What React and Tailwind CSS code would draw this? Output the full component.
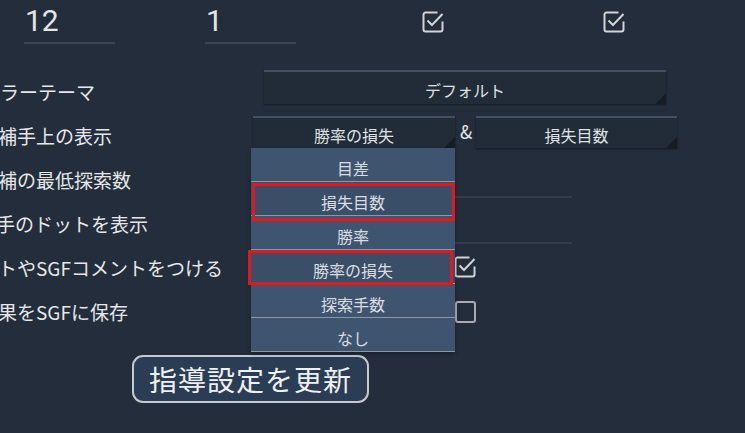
const labelFont = { fontFamily: '"Noto Sans CJK JP", "Noto Sans", sans-serif' }

function CheckedBox({ className }) {
  return (
    <svg className={className} width="22" height="22" viewBox="0 0 22 22" fill="none">
      <path d="M15.5 1.5H3.5a2 2 0 0 0-2 2v15a2 2 0 0 0 2 2h15a2 2 0 0 0 2-2v-8" stroke="#d2d4d8" strokeWidth="2" />
      <path d="M5.5 9.5l4.5 4.5 10.5-11" stroke="#d2d4d8" strokeWidth="2" />
    </svg>
  )
}

function EmptyBox({ className }) {
  return (
    <svg className={className} width="21" height="22" viewBox="0 0 21 22" fill="none">
      <rect x="1" y="1" width="19" height="20" rx="2" stroke="#a9adb3" strokeWidth="2" />
    </svg>
  )
}

function NumberInput({ value, className }) {
  return (
    <div className={`w-[91px] h-[44px] border-b-2 border-[#394555] ${className}`}>
      <div className="pt-[3px] pl-[1px] text-[30px] leading-[36px] text-[#e4e6ea] font-['Roboto']">{value}</div>
    </div>
  )
}

function FlatButton({ children, className }) {
  return (
    <div className={`relative flex items-center justify-center pt-[4px] bg-[#222b38] border-t-2 border-[#415064] shadow-[0_1px_2px_rgba(0,0,0,0.45)] text-[16px] text-[#dfe1e4] ${className}`}>
      {children}
      <div className="absolute right-0 bottom-0 w-0 h-0 border-l-[11px] border-l-transparent border-b-[11px] border-b-[#161c25]" />
    </div>
  )
}

function Label({ text, shift }) {
  return (
    <div className="w-[250px] shrink-0 overflow-hidden">
      <div className="whitespace-nowrap text-[19px] text-[#e6e7ea]" style={{ marginLeft: shift }}>
        {text}
      </div>
    </div>
  )
}

const options = [
  { t: '目差' },
  { t: '損失目数', sel: true },
  { t: '勝率' },
  { t: '勝率の損失', sel: true },
  { t: '探索手数' },
  { t: 'なし' },
]

export default function App() {
  return (
    <div className="relative w-[745px] h-[433px] overflow-hidden bg-[#232d3b]" style={labelFont}>
      {/* top row */}
      <div className="flex h-[70px] items-start">
        <NumberInput value="12" className="ml-[24px]" />
        <NumberInput value="1" className="ml-[90px]" />
        <CheckedBox className="ml-[126px] mt-[11px]" />
        <CheckedBox className="ml-[159px] mt-[11px]" />
      </div>

      <div className="flex h-[44px] items-center">
        <Label text="カラーテーマ" shift="-19px" />
        <FlatButton className="self-start ml-[14px] w-[402px] h-[34px]">デフォルト</FlatButton>
      </div>

      <div className="flex h-[44px] items-center">
        <Label text="候補手上の表示" shift="-21px" />
        <div className="self-start mt-[2px] ml-[3px] flex items-start">
          <FlatButton className="w-[202px] h-[32px]">勝率の損失</FlatButton>
          <span className="ml-[5px] w-[16px] text-[18px] leading-[30px] text-[#e6e7ea]">&amp;</span>
          <FlatButton className="w-[201px] h-[32px]">損失目数</FlatButton>
        </div>
      </div>

      <div className="flex h-[44px] items-center">
        <Label text="候補の最低探索数" shift="-21px" />
        <div className="self-start ml-[3px] mt-[38px] w-[319px] h-[2px] bg-[#323d4c]" />
      </div>

      <div className="flex h-[44px] items-center">
        <Label text="着手のドットを表示" shift="-23px" />
        <div className="self-start ml-[3px] mt-[40px] w-[319px] h-[2px] bg-[#323d4c]" />
      </div>

      <div className="flex h-[44px] items-center">
        <Label text="ノートやSGFコメントをつける" shift="-40px" />
        <CheckedBox className="ml-[204px] mt-[-2px]" />
      </div>

      <div className="flex h-[44px] items-center">
        <Label text="結果をSGFに保存" shift="-21px" />
        <EmptyBox className="ml-[205px]" />
      </div>

      <div className="mt-[21px] ml-[132px] w-[237px] h-[48px] flex items-center justify-center rounded-[11px] border-2 border-[#c6cad0] bg-[#2b3d54] text-[28px] text-[#eef0f3] tracking-[1px]">
        指導設定を更新
      </div>

      {/* open dropdown */}
      <div className="absolute left-[251px] top-[148px] w-[204px] bg-[#3f556f] shadow-[0_2px_4px_rgba(0,0,0,0.3)]">
        {options.map((o) => (
          <div
            key={o.t}
            className={`h-[34px] flex items-center justify-center pt-[6px] border-b border-[#8d98a6] text-[16px] text-[#d9dde2] ${o.sel ? 'bg-[#3a4e67]' : ''}`}
          >
            {o.t}
          </div>
        ))}
      </div>

      {/* highlight boxes */}
      <div className="absolute left-[252px] top-[183px] w-[203px] h-[38px] border-[3px] border-[#e3171e]" />
      <div className="absolute left-[248px] top-[250px] w-[205px] h-[35px] border-[3px] border-[#e3171e]" />
    </div>
  )
}
